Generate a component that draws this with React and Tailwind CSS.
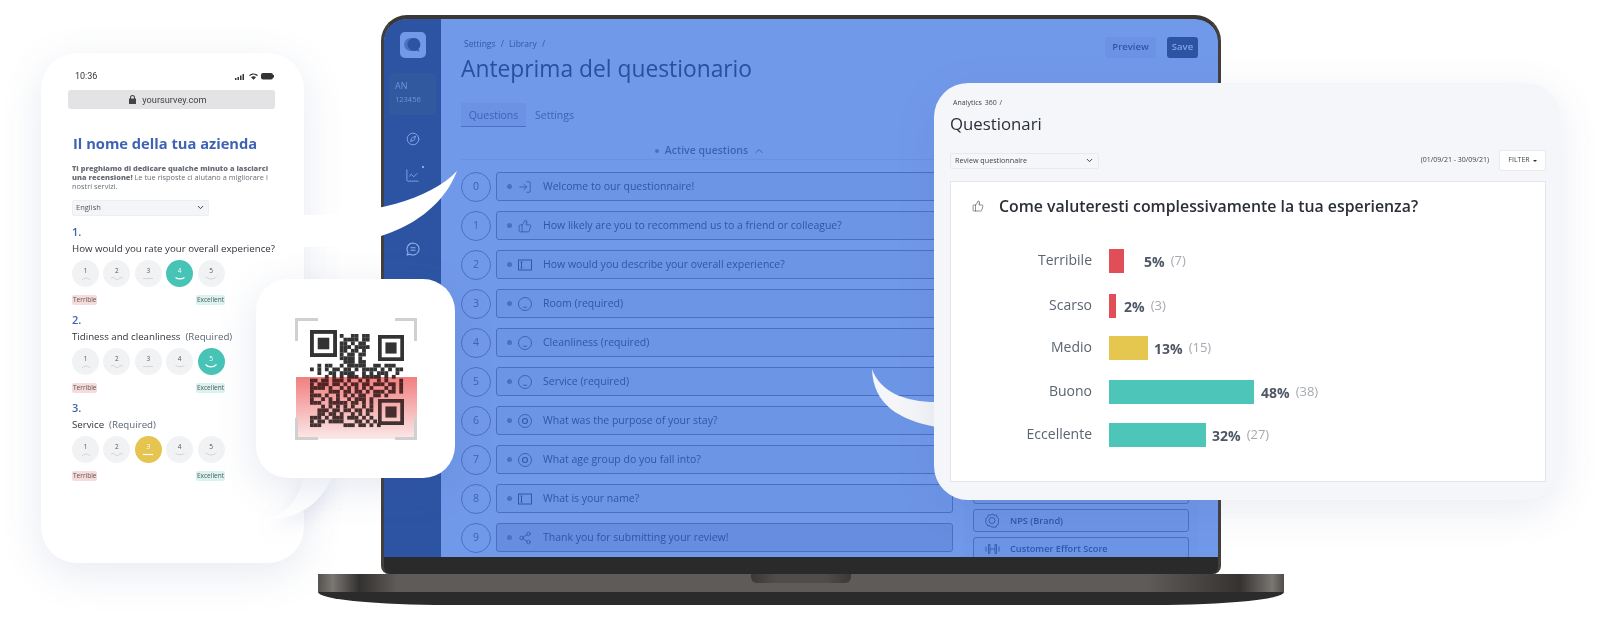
import {
  ChartLine,
  ChevronDown,
  ChevronUp,
  Compass,
  LogIn,
  Share2,
  ThumbsUp
} from "lucide-react";

const FormIcon = ({ className }) => (
  <svg viewBox="0 0 14 12" fill="none" stroke="currentColor" strokeWidth="1" className={className}>
    <rect x="0.5" y="1" width="13" height="10" />
    <path d="M2.5 3h2M2.5 9h2M3.5 3v6" />
  </svg>
);

const FaceIcon = ({ className }) => (
  <svg viewBox="0.2 0.2 13.6 13.6" fill="none" stroke="currentColor" strokeWidth="0.8" className={className}>
    <circle cx="7" cy="7" r="6.300" />
    <path d="M5 9.800c1.200.6 2.800.6 4 0" />
  </svg>
);

const TargetIcon = ({ className }) => (
  <svg viewBox="0.2 0.2 13.6 13.6" fill="none" stroke="currentColor" strokeWidth="0.8" className={className}>
    <circle cx="7" cy="7" r="6.300" />
    <circle cx="7" cy="7" r="2.400" strokeWidth="1.100" />
  </svg>
);

const questions = [
  { text: "Welcome to our questionnaire!", Icon: LogIn },
  { text: "How likely are you to recommend us to a friend or colleague?", Icon: ThumbsUp },
  { text: "How would you describe your overall experience?", Icon: FormIcon },
  { text: "Room (required)", Icon: FaceIcon },
  { text: "Cleanliness (required)", Icon: FaceIcon },
  { text: "Service (required)", Icon: FaceIcon },
  { text: "What was the purpose of your stay?", Icon: TargetIcon },
  { text: "What age group do you fall into?", Icon: TargetIcon },
  { text: "What is your name?", Icon: FormIcon },
  { text: "Thank you for submitting your review!", Icon: Share2, dark: true }
];

const qrRows = [
  "........#..##.##.........",
  ".........####.##.........",
  "........##.#.##..........",
  "........###.####.........",
  "........##.##.#..........",
  "........#.##.##..........",
  "........####.#...........",
  ".........###.##..........",
  "..#.##..#.#####..##.###..",
  "#.#.#.##.##.#.####.#.#.##",
  "..#..##.####..#.#.###..#.",
  "....#.#.#.###.#####.#.#..",
  "##.##.###.#..#.#..#.#...#",
  "#.###.##.#.##.##.###.##.#",
  "####.#..#.#.#.#.#...#.#.#",
  "#....###.##.##.#.###.##.#",
  "###.#..#.#.#.##..##.#....",
  "#..#.#.#..#.###.#........",
  "###..#####.##.#.#........",
  "...#.#.#.#.#..#.#........",
  "..###.##.##.##.##........",
  "..##.##.#..#.#.#.........",
  "###.#.###.###.#.#........",
  "#.##.####...##.#.#.......",
  "###......###.##.#.#......"
];

const mouths = {
  1: "M3 5c2-2.6 6-2.6 8 0",
  2: "M1 3.5c1.5-1.5 2.5-1.5 4 0s2.500 1.500 4 0 2.500-1 4 0",
  3: "M2 3.500h10",
  4: "M2.500 2.500c2.500 1.600 6.500 1.600 9 0",
  5: "M1.500 1.500c3 3.200 8 3.200 11 0"
};

const surveys = [
  { title: "How would you rate your overall experience?", picked: 4, bg: "bg-[#47c4b6]" },
  { title: "Tidiness and cleanliness", required: true, picked: 5, bg: "bg-[#47c4b6]" },
  { title: "Service", required: true, picked: 3, bg: "bg-[#e5c44f]" }
];

const results = [
  { label: "Terribile", value: "5%", count: "(7)", bar: "w-[15px] bg-[#e04f57]", gap: "ml-[20px]", top: "mt-[33px]" },
  { label: "Scarso", value: "2%", count: "(3)", bar: "w-[7px] bg-[#e04f57]", gap: "ml-[8px]", top: "mt-[21px]" },
  { label: "Medio", value: "13%", count: "(15)", bar: "w-[39px] bg-[#e5c64f]", gap: "ml-[6px]", top: "mt-[18px]" },
  { label: "Buono", value: "48%", count: "(38)", bar: "w-[145px] bg-[#4dc5b8]", gap: "ml-[7px]", top: "mt-[20px]" },
  { label: "Eccellente", value: "32%", count: "(27)", bar: "w-[97px] bg-[#4dc5b8]", gap: "ml-[6px]", top: "mt-[19px]" }
];

function Finder({ x, y, size }) {
  const m = size / 7;
  return (
    <g>
      <rect x={x + m / 2} y={y + m / 2} width={size - m} height={size - m} fill="none" stroke="#333" strokeWidth={m} />
      <rect x={x + 2 * m} y={y + 2 * m} width={3 * m} height={3 * m} fill="#333" />
    </g>
  );
}

function QrCode() {
  return (
    <svg width="122" height="122" viewBox="0 0 122 122">
      <defs>
        <linearGradient id="scan" x1="0" y1="0" x2="0" y2="1">
          <stop offset="0" stopColor="#ff9a9a" />
          <stop offset="1" stopColor="#fff0f0" />
        </linearGradient>
        <linearGradient id="tint" x1="0" y1="0" x2="0" y2="1">
          <stop offset="0" stopColor="#c02020" stopOpacity="0.22" />
          <stop offset="1" stopColor="#c07070" stopOpacity="0.06" />
        </linearGradient>
      </defs>
      {qrRows.map((row, r) =>
        row.split("").map((cell, c) =>
          cell === "#" ? (
            <rect key={`${r}-${c}`} x={15 + c * 3.72} y={16 + r * 3.72} width="3.8" height="3.8" fill="#333" />
          ) : null
        )
      )}
      <Finder x={15} y={12} size={27} />
      <Finder x={83} y={17} size={26} />
      <Finder x={83} y={81} size={26} />
      <rect x="1" y="59" width="121" height="62" fill="url(#scan)" className="mix-blend-multiply" />
      <rect x="1" y="59" width="121" height="62" fill="url(#tint)" />
      <path
        d="M1.500 23V1.500H23M100 1.500H120.500V23M1.500 100V120.500H23M100 120.500H120.500V100"
        fill="none"
        stroke="#d0d0d0"
        strokeWidth="3"
      />
    </svg>
  );
}

function SurveyQuestion({ index, item }) {
  return (
    <div className="mb-[8px]">
      <p className="text-[11px] leading-[14px] font-semibold text-[#3f63b4]">{index + 1}.</p>
      <p className="mt-[2px] text-[9.700px] leading-[15px] text-[#2f333b] whitespace-nowrap">
        {item.title}
        {item.required && <span className="ml-[5px] text-[#5d6675]">(Required)</span>}
      </p>
      <div className="mt-[4px] flex gap-[4.400px]">
        {[1, 2, 3, 4, 5].map((n) => {
          const on = n === item.picked;
          return (
            <div
              key={n}
              className={`flex h-[27px] w-[27px] flex-col items-center justify-center rounded-full ${on ? item.bg : "bg-[#f1f2f4]"}`}
            >
              <span className={`text-[6.500px] leading-[9px] ${on ? "text-white" : "text-[#555]"}`}>{n}</span>
              <svg width="14" height="6" viewBox="0 0 14 6" fill="none" stroke={on ? "#fff" : "#c9cbd0"} strokeWidth={on ? 1.2 : 0.8}>
                <path d={mouths[n]} />
              </svg>
            </div>
          );
        })}
      </div>
      <div className="mt-[8px] flex w-[153px] justify-between text-[6.500px] leading-[10px] text-[#555]">
        <span className="rounded-[2px] bg-[#f9dadb] px-[1px]">Terrible</span>
        <span className="rounded-[2px] bg-[#d9f3f0] px-[1px]">Excellent</span>
      </div>
    </div>
  );
}

function Phone() {
  return (
    <div className="absolute left-[41px] top-[53px] h-[510px] w-[263px] rounded-[36px] bg-white pl-[27px] pr-[29px] pt-[17px] shadow-[0_10px_40px_rgba(70,90,150,0.13)]">
      <div className="flex items-center justify-between pl-[7px] pr-[1px] font-['Roboto',sans-serif] text-[9px] leading-[12px] text-[#333]">
        <span>10:36</span>
        <svg width="39" height="8" viewBox="0 0 39 8" fill="#333">
          <path d="M0 6h1.500v2H0zM2.500 5H4v3H2.500zM5 3.500h1.500V8H5zM7.500 2H9v6H7.500z" />
          <path d="M14 3.200c2.600-2.400 6.400-2.400 9 0l-.9.900c-2.200-2-5-2-7.200 0zM16 5.200c1.500-1.300 3.500-1.300 5 0l-2.500 2.500z" />
          <rect x="26" y="1" width="12" height="6.500" rx="2" />
          <rect x="38" y="3" width="1" height="2.500" />
        </svg>
      </div>
      <div className="mt-[8px] flex h-[19px] items-center justify-center gap-[6px] rounded-[3px] bg-[#e3e3e5] pr-[7px] font-['Roboto',sans-serif] text-[9.200px] text-[#444]">
        <svg width="7" height="9" viewBox="0 0 7 9" fill="#444">
          <path d="M1 3.500V2.500a2.500 2.500 0 0 1 5 0v1h1V9H0V3.500zm1 0h3V2.500a1.500 1.500 0 0 0-3 0z" />
        </svg>
        <span>yoursurvey.com</span>
      </div>
      <h1 className="mt-[24px] pl-[5px] text-[14.700px] leading-[20px] font-bold text-[#3f63b4] whitespace-nowrap">
        Il nome della tua azienda
      </h1>
      <p className="mt-[11px] pl-[4px] text-[7.400px] leading-[9.200px] text-[#6b6f76]">
        <span className="font-extrabold">Ti preghiamo di dedicare qualche minuto a lasciarci una recensione!</span>{" "}
        Le tue risposte ci aiutano a migliorare i nostri servizi.
      </p>
      <div className="ml-[4px] mt-[8px] flex h-[16px] w-[137px] items-center justify-between rounded-[2px] border border-[#eceef1] bg-[#f4f5f8] px-[3px] text-[7.500px] text-[#555]">
        <span>English</span>
        <ChevronDown className="h-[9px] w-[9px] text-[#333]" strokeWidth={2.5} />
      </div>
      <div className="ml-[4px] mt-[9px]">
        {surveys.map((item, i) => (
          <SurveyQuestion key={item.title} index={i} item={item} />
        ))}
      </div>
    </div>
  );
}

function Sidebar() {
  return (
    <div className="flex w-[57px] shrink-0 flex-col items-center bg-[#2c54a3] pt-[13px] text-[#8fb0ef]">
      <div className="flex h-[26px] w-[26px] items-center justify-center rounded-[5px] bg-[#7199ea]">
        <svg width="18" height="16" viewBox="0 0 18 16">
          <circle cx="6.500" cy="7.500" r="6.500" fill="#4a71c2" />
          <path d="M10 1a6.500 6.500 0 0 1 4.500 11l1 2.500-3-1A6.500 6.500 0 1 1 10 1z" fill="#2c54a3" />
        </svg>
      </div>
      <div className="mt-[15px] h-[42px] w-[47px] rounded-[4px] bg-[#30599f] px-[6px] pt-[7px] text-[#6e94df]">
        <p className="text-[9px] leading-[12px]">AN</p>
        <p className="mt-[2px] text-[7.500px] leading-[10px]">123456</p>
      </div>
      <Compass className="mt-[17px] h-[14px] w-[14px]" strokeWidth={1.4} />
      <div className="relative mt-[22px]">
        <ChartLine className="h-[15px] w-[15px]" strokeWidth={1.3} />
        <span className="absolute -right-[4px] -top-[2px] h-[2px] w-[2px] rounded-full bg-[#a9c2f2]" />
      </div>
      <svg width="14" height="14" viewBox="0 0 14 14" fill="none" stroke="currentColor" strokeWidth="1.100" className="mt-[59px]">
        <path d="M7 1a6 6 0 1 1-3 11.200L1.200 13 2 10.300A6 6 0 0 1 7 1z" />
        <path d="M4.500 5.800h5M4.500 8.200h5" />
      </svg>
    </div>
  );
}

function QuestionRow({ index, item }) {
  const { Icon } = item;
  return (
    <div className="flex h-[29px] items-center gap-[5px]">
      <div className="flex h-[30px] w-[30px] shrink-0 items-center justify-center rounded-full border border-[#4a70c4] text-[10.500px] text-[#3d63b5]">
        {index}
      </div>
      <div
        className={`flex h-[29px] flex-1 items-center rounded-[3px] border border-[#4a70c4] pl-[10px] ${item.dark ? "bg-[#668ddf]" : "bg-[#6d95e6]"}`}
      >
        <span className="h-[5px] w-[5px] rounded-full bg-[#4a70c4]" />
        <Icon className="ml-[6px] h-[14px] w-[14px] text-[#3358a8]" strokeWidth={1.3} />
        <span className="ml-[11px] text-[10.500px] text-[#2f56a8]">{item.text}</span>
      </div>
    </div>
  );
}

function SideBox({ label, icon }) {
  return (
    <div className="flex h-[23px] shrink-0 items-center rounded-[3px] border border-[#4a70c4] bg-[#6d95e6] pl-[11px] text-[9.200px] font-semibold text-[#2f56a8]">
      <span className="flex w-[25px] text-[#3358a8]">{icon}</span>
      {label}
    </div>
  );
}

function Laptop() {
  return (
    <div className="absolute left-[318px] top-[15px] flex w-[966px] flex-col items-center">
      <div className="h-[559px] w-[840px] overflow-hidden rounded-t-[26px] rounded-b-[8px] border-x-[3px] border-t-[4px] border-x-[#423f3d] border-t-[#3a3735] bg-[#2a2a2a]">
        <div className="flex h-[538px] overflow-hidden rounded-t-[22px] bg-[#7199ea]">
          <Sidebar />
          <div className="flex min-w-0 flex-1 flex-col pl-[20px] pt-[18px]">
            <div className="flex justify-between pr-[20px]">
              <div>
                <p className="mt-[1px] pl-[3px] text-[8.500px] leading-[12px] font-medium text-[#3358a8] [word-spacing:3px]">
                  Settings / Library /
                </p>
                <h2 className="mt-[4px] text-[22.800px] leading-[30px] font-medium text-[#28509f] whitespace-nowrap">
                  Anteprima del questionario
                </h2>
              </div>
              <div className="flex h-[21px] gap-[11px] text-[9.500px] font-semibold">
                <span className="flex w-[51px] items-center justify-center rounded-[3px] bg-[#6b92e5] text-[#2f56a8]">Preview</span>
                <span className="flex w-[31px] items-center justify-center rounded-[3px] bg-[#2c54a3] text-[#7fa3ea]">Save</span>
              </div>
            </div>
            <div className="mt-[19px] flex text-[10.500px] leading-[24px] text-[#3d63b5]">
              <span className="h-[24px] w-[65px] border-b-[1.500px] border-[#4a70c4] bg-[#6b92e4] text-center">Questions</span>
              <span className="ml-[9px]">Settings</span>
            </div>
            <div className="flex min-h-0 flex-1 gap-[11px]">
              <div className="w-[492px] shrink-0">
                <div className="mt-[16px] flex h-[17px] items-center justify-center border-b border-[#6a91e2] pb-[1px] pl-[6px] text-[10.500px] font-semibold text-[#3d63b5]">
                  <span className="mr-[6px] h-[4px] w-[4px] rounded-full bg-[#4a70c4]" />
                  Active questions
                  <ChevronUp className="ml-[5px] h-[12px] w-[12px]" strokeWidth={2} />
                </div>
                <div className="mt-[12px] flex flex-col gap-[10px]">
                  {questions.map((item, i) => (
                    <QuestionRow key={item.text} index={i} item={item} />
                  ))}
                </div>
              </div>
              <div className="flex w-[235px] shrink-0 flex-col gap-[5px] bg-[#6f97e8] pl-[9px] pr-[10px] pt-[354px]">
                <div className="h-[23px] shrink-0 rounded-[3px] border border-[#4a70c4] bg-[#6d95e6]" />
                <SideBox
                  label="NPS (Brand)"
                  icon={
                    <svg width="14" height="15" viewBox="0 0 14 15" fill="none" stroke="currentColor" strokeWidth="0.900">
                      <path d="M7 .8l2 1.400 2.400-.1.800 2.300 1.800 1.500-.7 2.300.7 2.300-2 1.400-.8 2.200-2.400-.1L7 14.200l-2-1.400-2.400.1-.8-2.200-1.400-1.400.7-2.300L.8 5.600l1.800-1.300.8-2.300 2.400.1z" />
                      <circle cx="7" cy="7.500" r="3" />
                    </svg>
                  }
                />
                <SideBox
                  label="Customer Effort Score"
                  icon={
                    <svg width="15" height="12" viewBox="0 0 15 12" fill="none" stroke="currentColor" strokeWidth="0.900">
                      <path d="M1 3.500v5M3.500 1.500h1.500v9H3.500zM10 1.500h1.500v9H10zM14 3.500v5M5 6h5" />
                    </svg>
                  }
                />
              </div>
            </div>
          </div>
        </div>
      </div>
      <div className="w-full">
        <div className="flex h-[18px] justify-center bg-[linear-gradient(90deg,#555250_0%,#7a7672_1.500%,#333130_4.300%,#5f5b58_8.200%,#5f5b58_85.800%,#353230_95.400%,#7a7672_98.800%,#4f4c4a_100%)]">
          <div className="h-[9px] w-[100px] rounded-b-[6px] bg-[linear-gradient(90deg,#3b3836,#504c4a_25%,#504c4a_75%,#3b3836)]" />
        </div>
        <div className="h-[13px] rounded-bl-[130px_13px] rounded-br-[130px_13px] bg-[#2b2b2b]" />
      </div>
    </div>
  );
}

function ResultsCard() {
  return (
    <div className="absolute left-[934px] top-[83px] h-[417px] w-[626px] rounded-[34px] bg-[#f4f6f9] pl-[16px] pr-[14px] pt-[15px] shadow-[0_10px_40px_rgba(70,90,150,0.12)]">
      <p className="pl-[3px] text-[7px] leading-[10px] text-[#444] [word-spacing:1px]">Analytics 360 /</p>
      <h3 className="mt-[4px] text-[16.800px] leading-[24px] font-medium text-[#2b2f38]">Questionari</h3>
      <div className="mt-[14px] flex h-[21px] items-center justify-between">
        <div className="flex h-[16px] w-[149px] items-center justify-between rounded-[2px] border border-[#e8eaee] px-[4px] text-[7.200px] text-[#444]">
          <span>Review questionnaire</span>
          <ChevronDown className="h-[9px] w-[9px] text-[#333]" strokeWidth={2.5} />
        </div>
        <div className="flex items-center">
          <span className="text-[7px] text-[#444]">(01/09/21 - 30/09/21)</span>
          <span className="ml-[10px] flex h-[21px] w-[47px] items-center justify-center gap-[3px] rounded-[2px] border border-[#e8eaee] bg-white text-[7px] font-medium text-[#444]">
            FILTER
            <span className="border-x-[2px] border-t-[2.500px] border-x-transparent border-t-[#333]" />
          </span>
        </div>
      </div>
      <div className="mt-[10px] h-[301px] border border-[#e3e5ea] bg-white pl-[21px] pt-[14px]">
        <div className="flex items-center">
          <ThumbsUp className="h-[12px] w-[12px] text-[#555]" strokeWidth={1.3} />
          <p className="ml-[15px] text-[15.850px] leading-[20px] font-semibold text-[#2b2f38] whitespace-nowrap">
            Come valuteresti complessivamente la tua esperienza?
          </p>
        </div>
        {results.map((row) => (
          <div key={row.label} className={`flex h-[24px] items-center ${row.top}`}>
            <span className="-mt-[3px] w-[120px] text-right text-[14px] text-[#5a6472]">{row.label}</span>
            <div className={`ml-[17px] h-[24px] ${row.bar}`} />
            <span className={`${row.gap} text-[14px] font-bold text-[#4d5766]`}>{row.value}</span>
            <span className="ml-[6px] text-[13px] text-[#a5a9b0]">{row.count}</span>
          </div>
        ))}
      </div>
    </div>
  );
}

export default function App() {
  return (
    <div className="relative h-[620px] w-[1600px] overflow-hidden bg-white font-['Open_Sans',sans-serif]">
      <Laptop />
      <Phone />
      <svg width="1600" height="620" viewBox="0 0 1600 620" className="pointer-events-none absolute left-0 top-0">
        <path d="M303 215C370 215 430 200 457 171C440 215 390 247 303 247Z" fill="#fff" />
        <path d="M872 369C880 392 905 402 936 402L936 427C900 420 873 405 872 369Z" fill="#f4f6f9" />
      </svg>
      <svg width="1600" height="620" viewBox="0 0 1600 620" className="pointer-events-none absolute left-0 top-0 drop-shadow-[0_8px_10px_rgba(70,90,150,0.12)]">
        <path d="M303 476C300 500 285 515 263 520C295 520 322 505 332 476Z" fill="#fff" />
      </svg>
      <div className="absolute left-[256px] top-[279px] flex h-[199px] w-[199px] items-center justify-center rounded-[32px] bg-white shadow-[0_10px_40px_rgba(70,90,150,0.14)]">
        <QrCode />
      </div>
      <ResultsCard />
    </div>
  );
}
